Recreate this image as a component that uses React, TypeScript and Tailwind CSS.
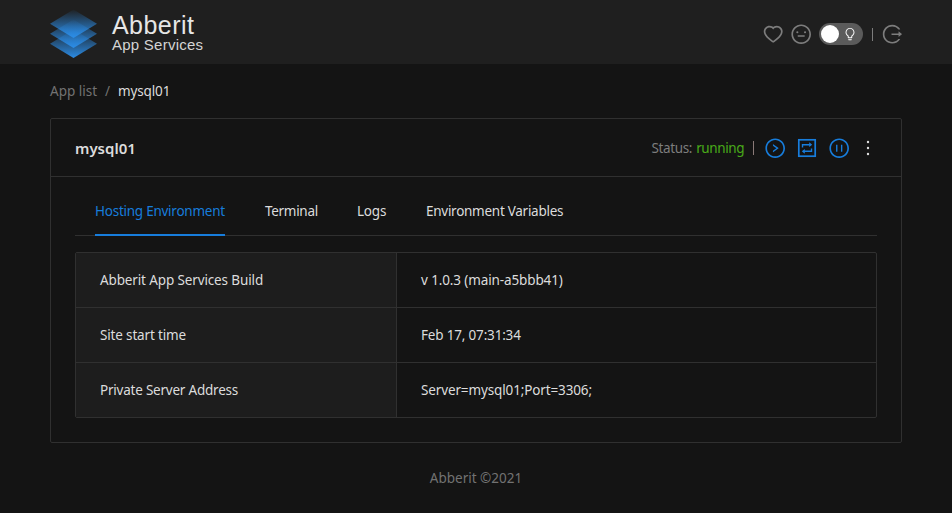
import {
  AiOutlineBulb,
  AiOutlineHeart,
  AiOutlineLogout,
  AiOutlineMeh,
  AiOutlineMore,
  AiOutlinePauseCircle,
  AiOutlineRightCircle,
} from "react-icons/ai";

function Logo() {
  return (
    <svg width="48" height="50" viewBox="0 0 48 50" className="block">
      <defs>
        <linearGradient id="layer" x1="0" y1="0" x2="0" y2="1">
          <stop offset="0" stopColor="#2b8ce6" stopOpacity="0.02" />
          <stop offset="1" stopColor="#2b8ce6" />
        </linearGradient>
      </defs>
      <path d="M23.5 20.5 47 34.8 23.5 49 0 34.8Z" fill="url(#layer)" />
      <path d="M23.5 10.5 47 24.8 23.5 39 0 24.8Z" fill="url(#layer)" />
      <path d="M23.5 0.5 47 14.8 23.5 29 0 14.8Z" fill="url(#layer)" />
    </svg>
  );
}

function RestartIcon() {
  return (
    <svg width="20" height="20" viewBox="0 0 20 20" fill="none" stroke="currentColor" strokeWidth="1.7" className="block">
      <rect x="1.8" y="1.8" width="16.4" height="16.4" />
      <path d="M5.5 9.6V6.7H12.8M14.5 10.4V13.3H7.2" strokeWidth="1.4" />
      <path d="M12.2 4.3 15.2 6.7 12.2 9ZM7.8 11 4.8 13.3 7.8 15.7Z" fill="currentColor" stroke="none" />
    </svg>
  );
}

const tabs = [
  { label: "Terminal", style: "w-[52px] tracking-[-0.3px]" },
  { label: "Logs", style: "w-[29px] tracking-[-0.2px]" },
  { label: "Environment Variables", style: "w-[137px] tracking-[-0.27px]" },
];

const rows = [
  { name: "Abberit App Services Build", value: "v 1.0.3 (main-a5bbb41)", nameStyle: "tracking-[-0.13px]", valueStyle: "tracking-[-0.12px]" },
  { name: "Site start time", value: "Feb 17, 07:31:34", nameStyle: "tracking-[-0.16px]", valueStyle: "tracking-[-0.18px]" },
  { name: "Private Server Address", value: "Server=mysql01;Port=3306;", nameStyle: "tracking-[-0.22px]", valueStyle: "tracking-[-0.13px]" },
];

export default function App() {
  return (
    <div className="flex h-[513px] w-[952px] flex-col overflow-hidden bg-[#141414] font-['Noto_Sans',sans-serif] text-[13.5px] leading-[22px] whitespace-nowrap text-[#dcdcdc]">
      <header className="flex h-16 shrink-0 items-start justify-between bg-[#1f1f1f] pr-[49px] pl-[50px]">
        <div className="flex pt-[9px]">
          <Logo />
          <div className="ml-[14px] pt-[3px] font-['Liberation_Sans',Arial,sans-serif] text-[#e6e6e6]">
            <div className="text-[25px] leading-[27px] tracking-[0.45px]">Abberit</div>
            <div className="text-[15px] leading-[12px] tracking-[0.25px] text-[#d4d4d4]">App Services</div>
          </div>
        </div>
        <div className="flex h-[68px] items-center text-[#7d7d7d]">
          <AiOutlineHeart className="size-[22.4px]" />
          <AiOutlineMeh className="ml-[5.6px] size-[22.4px]" />
          <div className="ml-[6px] flex h-[22px] w-11 items-center rounded-full bg-[#5b5b5b] pl-[2px]">
            <span className="size-[18px] rounded-full bg-white" />
            <AiOutlineBulb className="ml-[4px] size-[14px] text-white" />
          </div>
          <span className="ml-[9px] h-[13px] w-px bg-[#7d7d7d]" />
          <AiOutlineLogout className="ml-[8px] size-[22.4px]" />
        </div>
      </header>

      <nav className="mt-4 ml-[50px] flex h-[22px] gap-[8px] text-[#727272]">
        <span>App list</span>
        <span>/</span>
        <span className="tracking-[-0.15px] text-[#dcdcdc]">mysql01</span>
      </nav>

      <main className="mx-[50px] mt-4 h-[325px] rounded-[2px] border border-[#303030]">
        <div className="flex h-[58px] items-center justify-between border-b border-[#303030] pr-[22px] pl-6">
          <h1 className="text-[15px] font-semibold">mysql01</h1>
          <div className="flex items-center pt-[2px] text-[#177ddc]">
            <span className="tracking-[-0.35px] text-[#7d7d7d]">Status:</span>
            <span className="ml-1 tracking-[-0.38px] text-[#49aa19]">running</span>
            <span className="ml-[9px] h-[14px] w-px bg-[#8a7a78]" />
            <AiOutlineRightCircle className="ml-[10px] size-[22.4px]" />
            <span className="ml-[10px]">
              <RestartIcon />
            </span>
            <AiOutlinePauseCircle className="ml-[11px] size-[22.4px]" />
            <AiOutlineMore className="ml-[7px] size-[22px] text-[#dcdcdc]" />
          </div>
        </div>

        <div className="px-6">
          <div className="flex h-[59px] gap-10 border-b border-[#303030] pl-5">
            <div className="h-[59px] w-[130px] border-b-2 border-[#177ddc] pt-[23px] tracking-[-0.25px] text-[#177ddc]">
              Hosting Environment
            </div>
            {tabs.map((tab) => (
              <div key={tab.label} className={`pt-[23px] ${tab.style}`}>
                {tab.label}
              </div>
            ))}
          </div>
          <div className="mt-4 overflow-hidden rounded-[2px] border border-[#303030]">
            {rows.map((row) => (
              <div key={row.name} className="flex h-[55px] items-center border-b border-[#303030] last:h-[54px] last:border-b-0">
                <div className={`flex h-full w-[321px] items-center border-r border-[#303030] bg-[#1d1d1d] pl-6 ${row.nameStyle}`}>
                  {row.name}
                </div>
                <div className={`pl-6 ${row.valueStyle}`}>{row.value}</div>
              </div>
            ))}
          </div>
        </div>
      </main>

      <footer className="mt-6 text-center text-[#727272]">Abberit ©2021</footer>
    </div>
  );
}
